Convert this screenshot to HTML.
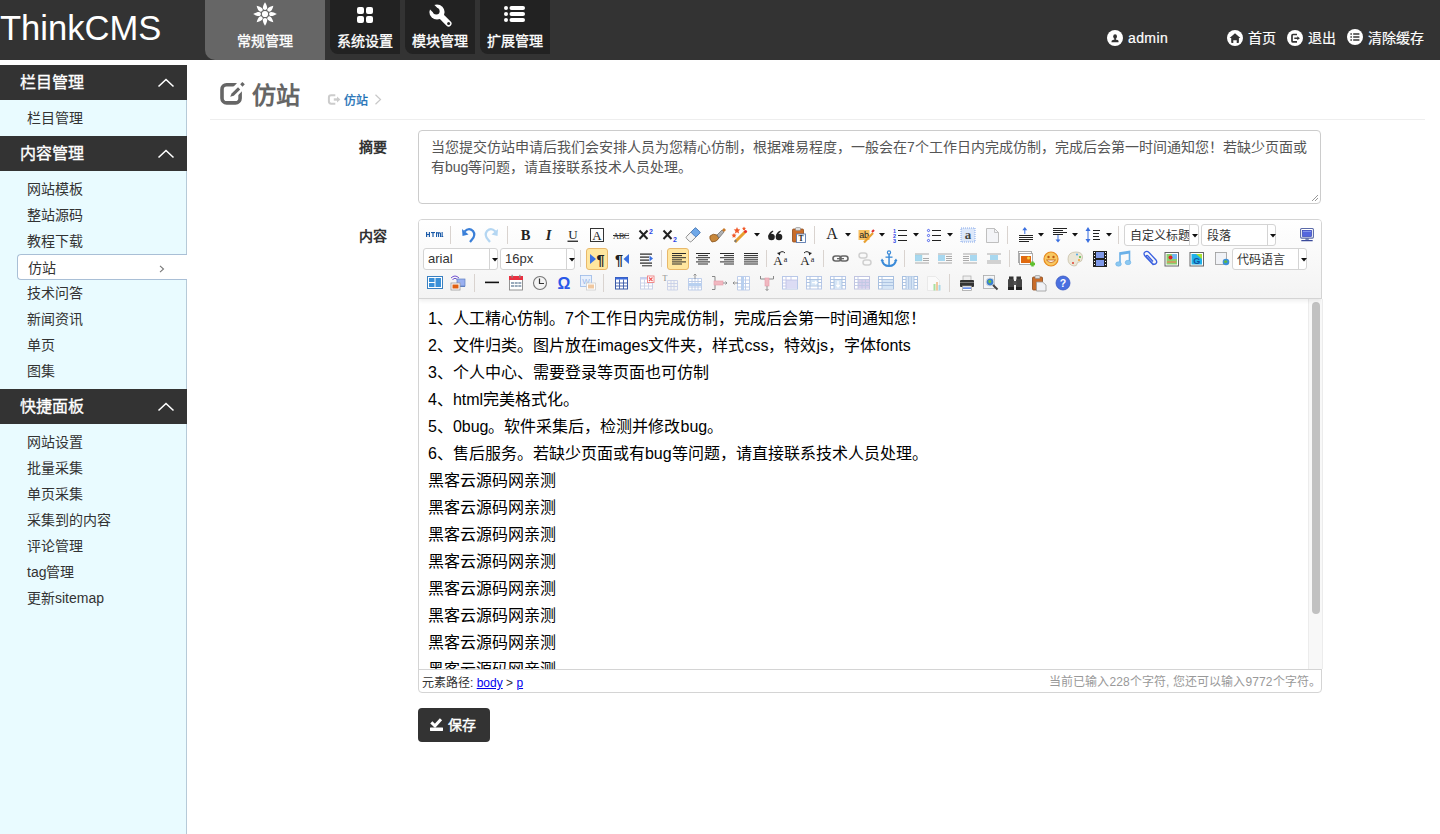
<!DOCTYPE html>
<html lang="zh-CN"><head><meta charset="utf-8">
<style>
*{margin:0;padding:0;box-sizing:border-box}
html,body{width:1440px;height:834px;overflow:hidden;background:#fff;font-family:"Liberation Sans",sans-serif;color:#333}
.hd{position:absolute;left:0;top:0;width:1440px;height:60px;background:#333}
.logo{position:absolute;left:0;top:6.5px;font-size:34.6px;color:#fff;line-height:42px;letter-spacing:0}
.tab{position:absolute;top:0;height:54px;background:#222;border-bottom-left-radius:8px;color:#fff;font-size:14px;font-weight:normal;-webkit-text-stroke:0.35px #fff;text-align:center}
.tab.on{background:#666;height:60px;border-bottom-left-radius:10px}
.tab .t{position:absolute;left:0;right:0;top:31px;line-height:20px;white-space:nowrap}
.tab svg{position:absolute}
.hr{position:absolute;top:28px;color:#fff;font-size:14px;line-height:20px;white-space:nowrap;font-weight:normal;-webkit-text-stroke:0.2px #fff}
.hr svg{position:absolute;left:0;top:2px}
.sb{position:absolute;left:0;top:60px;width:187px;height:774px;background:linear-gradient(#fff 0,#fff 5px,#e9fbff 5px);border-right:1px solid #b6cad8}
.sh{position:absolute;left:0;width:187px;height:35px;background:#333;color:#fff;font-size:16px;font-weight:normal;-webkit-text-stroke:0.35px #fff;line-height:35px;padding-left:20px}
.sh svg{position:absolute;left:157px;top:13px}
.si{position:absolute;left:27px;font-size:14px;color:#333;line-height:20px;white-space:nowrap}
.sel{position:absolute;left:17px;top:194px;width:170px;height:26px;background:#fff;border:1px solid #a9bfd6;border-right:none;border-radius:4px 0 0 4px}
.ttl{position:absolute;left:252px;top:80px;font-size:24px;font-weight:bold;color:#666;line-height:32px}
.bc{position:absolute;left:344px;top:92.5px;font-size:12px;color:#1a6fb5;-webkit-text-stroke:0.3px #1a6fb5;line-height:16px}
.line{position:absolute;left:210px;top:119px;width:1215px;height:1px;background:#eee}
.lbl{position:absolute;left:359px;font-size:14px;font-weight:bold;color:#333;line-height:20px}
.ta{position:absolute;left:418px;top:130px;width:903px;height:74px;border:1px solid #ccc;border-radius:4px;padding:6px 12px;font-size:14px;line-height:20px;color:#555}
.ed{position:absolute;left:418px;top:219px;width:904px;height:474px;border:1px solid #d4d4d4;border-radius:4px;overflow:hidden;background:#fff}
.tb{position:absolute;left:0;top:0;width:902px;height:79px;background:linear-gradient(#fff,#f3f3f3);border-bottom:1px solid #d4d4d4;box-shadow:0 2px 4px rgba(0,0,0,0.07);z-index:2}
.ic{position:absolute}
.sep{position:absolute;width:1px;background:#d9d3cf}
.cb{position:absolute;background:#fff;border:1px solid #d4d4d4;border-radius:3px}
.cbd{position:absolute;top:0;bottom:0;width:1px;background:#d4d4d4}
.cbt{position:absolute;top:0;overflow:hidden;white-space:nowrap;color:#333}
.act{position:absolute;background:#ffe69f;border:1px solid #e8b86a;border-radius:3px}
.body{position:absolute;left:0;top:79px;width:890px;height:370px;overflow:hidden;padding:6px 9px}
.body p{font-size:16px;line-height:27px;color:#000;white-space:nowrap}
.scr{position:absolute;left:1308px;top:299px;width:15px;height:370px;background:#f8f8f8;border-left:1px solid #ececec;border-right:1px solid #ececec}
.thumb{position:absolute;left:3px;top:3px;width:8px;height:312px;border-radius:4px;background:#c1c1c1}
.st{position:absolute;left:0;top:449px;width:902px;height:23px;border-top:1px solid #d4d4d4;font-size:12px;line-height:22px;color:#333;padding-left:3px;padding-top:2px}
.st a{color:#00e;text-decoration:underline}
.st .r{position:absolute;right:0px;top:1px;color:#999;letter-spacing:0.1px}
.btn{position:absolute;left:418px;top:708px;width:72px;height:34px;background:#333;border-radius:4px;color:#fff;font-size:14px;font-weight:normal;-webkit-text-stroke:0.4px #fff;line-height:34px}
</style></head><body>
<div class="hd">
  <div class="logo">ThinkCMS</div>
  <div class="tab on" style="left:205px;width:120px">
    <svg style="left:47px;top:1px" width="26" height="26" viewBox="0 0 26 26"><g fill="#fff"><circle cx="13" cy="13" r="3.1"/>
      <g id="pt"><path d="M13 1.2 C14.3 3.2 15.1 5.3 15.1 6.8 C15.1 8.1 14.2 8.9 13 8.9 C11.8 8.9 10.9 8.1 10.9 6.8 C10.9 5.3 11.7 3.2 13 1.2Z"/></g>
      <use href="#pt" transform="rotate(45 13 13)"/><use href="#pt" transform="rotate(90 13 13)"/><use href="#pt" transform="rotate(135 13 13)"/><use href="#pt" transform="rotate(180 13 13)"/><use href="#pt" transform="rotate(225 13 13)"/><use href="#pt" transform="rotate(270 13 13)"/><use href="#pt" transform="rotate(315 13 13)"/></g></svg>
    <div class="t">常规管理</div>
  </div>
  <div class="tab" style="left:330px;width:70px">
    <svg style="left:27px;top:7px" width="16" height="16" viewBox="0 0 16 16"><g fill="#fff"><rect x="0" y="0" width="7" height="7" rx="2"/><rect x="9" y="0" width="7" height="7" rx="2"/><rect x="0" y="9" width="7" height="7" rx="2"/><rect x="9" y="9" width="7" height="7" rx="2"/></g></svg>
    <div class="t">系统设置</div></div>
  <div class="tab" style="left:405px;width:70px">
    <svg style="left:23px;top:3px" width="25" height="25" viewBox="0 0 25 25"><defs><mask id="wm" maskUnits="userSpaceOnUse" x="0" y="0" width="25" height="25"><rect width="25" height="25" fill="#fff"/><circle cx="8.3" cy="8.3" r="3.3" fill="#000"/><path d="M8.3 8.3 L1 1" stroke="#000" stroke-width="6.2"/></mask></defs><g mask="url(#wm)" fill="#fff"><circle cx="9" cy="9" r="7.6"/><path d="M9 9 L20.6 20.6" stroke="#fff" stroke-width="5.8" stroke-linecap="round"/></g><circle cx="20.6" cy="20.6" r="1.5" fill="#222"/></svg>
    <div class="t">模块管理</div></div>
  <div class="tab" style="left:480px;width:70px">
    <svg style="left:23px;top:5px" width="24" height="18" viewBox="0 0 24 18"><g fill="#fff"><circle cx="3" cy="3" r="2"/><circle cx="3" cy="9" r="2"/><circle cx="3" cy="15" r="2"/><rect x="6.5" y="1" width="15.5" height="4" rx="2"/><rect x="6.5" y="7" width="15.5" height="4" rx="2"/><rect x="6.5" y="13" width="15.5" height="4" rx="2"/></g></svg>
    <div class="t">扩展管理</div></div>
  <div class="hr" style="left:1107px;padding-left:21px;letter-spacing:0.4px">
    <svg width="16" height="16" viewBox="0 0 16 16"><circle cx="8" cy="8" r="8" fill="#fff"/><ellipse cx="8.1" cy="6.5" rx="1.9" ry="2.2" fill="#333"/><rect x="7.3" y="7.5" width="1.6" height="2.5" fill="#333"/><path d="M4.4 12.2 Q4.2 10 6.5 9.7 H9.7 Q12 10 11.5 12.2Z" fill="#333"/></svg>admin</div>
  <div class="hr" style="left:1227px;padding-left:21px">
    <svg width="16" height="16" viewBox="0 0 16 16"><circle cx="8" cy="8" r="8" fill="#fff"/><path d="M8 3.2 L13.4 8.1 H11.9 V12.3 Q11.9 13 11.2 13 H9.7 V10.2 H6.3 V13 H4.9 Q4.2 13 4.2 12.3 V8.1 H2.6 Z" fill="#333"/></svg>首页</div>
  <div class="hr" style="left:1287px;padding-left:21px">
    <svg width="16" height="16" viewBox="0 0 16 16"><circle cx="8" cy="8" r="8" fill="#fff"/><path d="M10 4.5 H6 Q5 4.5 5 5.5 V10.9 Q5 11.9 6 11.9 H10" fill="none" stroke="#333" stroke-width="1.7"/><path d="M7.3 7.6 H10.3 V6.3 L12.9 8.3 L10.3 10.3 V9 H7.3Z" fill="#333"/></svg>退出</div>
  <div class="hr" style="left:1347px;padding-left:21px">
    <svg style="top:1px" width="16" height="16" viewBox="0 0 16 16"><circle cx="8" cy="8" r="8" fill="#fff"/><g fill="#444"><rect x="3.4" y="4.2" width="1.5" height="1.6"/><rect x="3.4" y="7.2" width="1.5" height="1.6"/><rect x="3.4" y="10.2" width="1.5" height="1.6"/><rect x="6.2" y="4.2" width="6.2" height="1.6"/><rect x="6.2" y="7.2" width="6.2" height="1.6"/><rect x="6.2" y="10.2" width="6.2" height="1.6"/></g></svg>清除缓存</div>
</div>

<div class="sb"><div style="position:absolute;left:186px;top:0;width:1px;height:5px;background:#fff"></div>
  <div class="sh" style="top:5px">栏目管理<svg width="18" height="10" viewBox="0 0 18 10"><path d="M1.5 8.5 L9 1.5 L16.5 8.5" fill="none" stroke="#fff" stroke-width="1.6"/></svg></div>
  <div class="si" style="top:48px">栏目管理</div>
  <div class="sh" style="top:76px">内容管理<svg width="18" height="10" viewBox="0 0 18 10"><path d="M1.5 8.5 L9 1.5 L16.5 8.5" fill="none" stroke="#fff" stroke-width="1.6"/></svg></div>
  <div class="si" style="top:119px">网站模板</div>
  <div class="si" style="top:145px">整站源码</div>
  <div class="si" style="top:171px">教程下载</div>
  <div class="sel"><svg style="position:absolute;left:141px;top:10px" width="6" height="8" viewBox="0 0 6 8"><path d="M1 0.8 L4.5 4 L1 7.2" fill="none" stroke="#777" stroke-width="1.1"/></svg></div>
  <div class="si" style="top:198px;left:28px">仿站</div>
  <div class="si" style="top:223px">技术问答</div>
  <div class="si" style="top:249px">新闻资讯</div>
  <div class="si" style="top:275px">单页</div>
  <div class="si" style="top:301px">图集</div>
  <div class="sh" style="top:329px">快捷面板<svg width="18" height="10" viewBox="0 0 18 10"><path d="M1.5 8.5 L9 1.5 L16.5 8.5" fill="none" stroke="#fff" stroke-width="1.6"/></svg></div>
  <div class="si" style="top:372px">网站设置</div>
  <div class="si" style="top:398px">批量采集</div>
  <div class="si" style="top:424px">单页采集</div>
  <div class="si" style="top:450px">采集到的内容</div>
  <div class="si" style="top:476px">评论管理</div>
  <div class="si" style="top:502px">tag管理</div>
  <div class="si" style="top:528px">更新sitemap</div>
</div>

<svg style="position:absolute;left:219px;top:81px" width="28" height="26" viewBox="0 0 28 26"><rect x="3" y="3.8" width="18.1" height="18.1" rx="4.6" fill="none" stroke="#666" stroke-width="3.6"/><path d="M12 14.75 L30 -3.25" stroke="#fff" stroke-width="9.3"/><path d="M11.2 15.8 L12.6 12.5 L19 6.2 L21.2 8.4 L14.8 14.7Z" fill="#666"/><path d="M21.2 3.3 L23.3 1 L25.8 3.2 L23.5 5.7Z" fill="#666"/></svg>
<div class="ttl">仿站</div>
<svg style="position:absolute;left:327px;top:93px" width="14" height="13" viewBox="0 0 14 13"><path d="M8.3 2.2 H4.2 Q1.9 2.2 1.9 4.5 V8.6 Q1.9 10.7 4.2 10.7 H8.3" fill="none" stroke="#ccc" stroke-width="2"/><rect x="6.8" y="5.3" width="3.6" height="2.4" fill="#ccc"/><path d="M10 3.6 L13.4 6.5 L10 9.4Z" fill="#ccc"/></svg>
<div class="bc">仿站</div>
<svg style="position:absolute;left:374px;top:94px" width="8" height="11" viewBox="0 0 8 11"><path d="M1.5 0.8 L6.5 5.5 L1.5 10.2" fill="none" stroke="#c8c8c8" stroke-width="1.2"/></svg>
<div class="line"></div>

<div class="lbl" style="top:137px">摘要</div>
<div class="ta">当您提交仿站申请后我们会安排人员为您精心仿制，根据难易程度，一般会在7个工作日内完成仿制，完成后会第一时间通知您！若缺少页面或<br>有bug等问题，请直接联系技术人员处理。
<svg style="position:absolute;right:1px;bottom:1px" width="8" height="8" viewBox="0 0 8 8"><path d="M7 1 L1 7 M7 4 L4 7" stroke="#999" stroke-width="1"/></svg></div>

<div class="lbl" style="top:226px">内容</div>
<div class="ed">
  <div class="tb"></div>
  <div class="body">
<p>1、人工精心仿制。7个工作日内完成仿制，完成后会第一时间通知您！</p>
<p>2、文件归类。图片放在images文件夹，样式css，特效js，字体fonts</p>
<p>3、个人中心、需要登录等页面也可仿制</p>
<p>4、html完美格式化。</p>
<p>5、0bug。软件采集后，检测并修改bug。</p>
<p>6、售后服务。若缺少页面或有bug等问题，请直接联系技术人员处理。</p>
<p>黑客云源码网亲测</p>
<p>黑客云源码网亲测</p>
<p>黑客云源码网亲测</p>
<p>黑客云源码网亲测</p>
<p>黑客云源码网亲测</p>
<p>黑客云源码网亲测</p>
<p>黑客云源码网亲测</p>
<p>黑客云源码网亲测</p>
  </div>
  
  <div class="st">元素路径: <a>body</a> &gt; <a>p</a><span class="r">当前已输入228个字符, 您还可以输入9772个字符。</span></div>
</div>
<div class="scr"><div class="thumb"></div></div>
<div style="position:absolute;left:0;top:0;z-index:3">
<svg class="ic" style="left:424px;top:225px" width="20" height="20" viewBox="0 0 20 20"><g fill="#1a5aa8"><rect x="2" y="7" width="1.2" height="5"/><rect x="4.8" y="7" width="1.2" height="5"/><rect x="2" y="9" width="4" height="1"/><rect x="7" y="7" width="4" height="1.1"/><rect x="8.4" y="7" width="1.2" height="5"/><rect x="12" y="7.3" width="1.1" height="4.7"/><rect x="14" y="8" width="1" height="4"/><rect x="15.9" y="8" width="1.1" height="4"/><rect x="12" y="7.3" width="4.6" height="1.1" rx="0.5"/><rect x="17.6" y="7" width="1.1" height="5"/><rect x="17.6" y="11" width="1.6" height="1"/></g></svg>
<div class="sep" style="left:450px;top:226px;height:18px"></div>
<svg class="ic" style="left:458px;top:225px" width="20" height="20" viewBox="0 0 20 20"><path d="M6.5 6.5 Q11 2 15 6 Q18 10 14 14.5 L12 17" fill="none" stroke="#3a7fd8" stroke-width="2.2"/><path d="M4 4 L4.5 11 L10.5 9.5 Z" fill="#3a7fd8"/></svg>
<svg class="ic" style="left:482px;top:225px" width="20" height="20" viewBox="0 0 20 20"><path d="M13.5 6.5 Q9 2 5 6 Q2 10 6 14.5 L8 17" fill="none" stroke="#b4d6f2" stroke-width="2.2"/><path d="M16 4 L15.5 11 L9.5 9.5 Z" fill="#b4d6f2"/></svg>
<div class="sep" style="left:507px;top:226px;height:18px"></div>
<svg class="ic" style="left:516px;top:225px" width="20" height="20" viewBox="0 0 20 20"><text x="9.6" y="14.6" font-family="Liberation Serif" font-weight="bold" font-size="14.5" fill="#222" text-anchor="middle">B</text></svg>
<svg class="ic" style="left:539px;top:225px" width="20" height="20" viewBox="0 0 20 20"><text x="9.6" y="14.6" font-family="Liberation Serif" font-style="italic" font-weight="bold" font-size="14.5" fill="#222" text-anchor="middle">I</text></svg>
<svg class="ic" style="left:563px;top:225px" width="20" height="20" viewBox="0 0 20 20"><text x="10" y="14.2" font-family="Liberation Serif" font-size="13" fill="#222" text-anchor="middle">U</text><rect x="4.5" y="15.6" width="10.5" height="1.3" fill="#222"/></svg>
<svg class="ic" style="left:587px;top:225px" width="20" height="20" viewBox="0 0 20 20"><rect x="3.5" y="3.5" width="13" height="13" fill="none" stroke="#333" stroke-width="1"/><text x="10" y="14.8" font-family="Liberation Serif" font-size="13" fill="#222" text-anchor="middle">A</text></svg>
<svg class="ic" style="left:611px;top:225px" width="20" height="20" viewBox="0 0 20 20"><text x="10" y="13.5" font-family="Liberation Serif" font-size="8.5" fill="#333" text-anchor="middle" letter-spacing="-0.5">ABC</text><rect x="2" y="10" width="16" height="1" fill="#333"/></svg>
<svg class="ic" style="left:636px;top:225px" width="20" height="20" viewBox="0 0 20 20"><path d="M3.5 5.5 L11.5 14 M11.5 5.5 L3.5 14" stroke="#222" stroke-width="2"/><text x="15" y="8.5" font-family="Liberation Sans" font-weight="bold" font-size="7" fill="#2b45e6" text-anchor="middle">2</text></svg>
<svg class="ic" style="left:660px;top:225px" width="20" height="20" viewBox="0 0 20 20"><path d="M3.5 5.5 L11.5 14 M11.5 5.5 L3.5 14" stroke="#222" stroke-width="2"/><text x="15" y="17" font-family="Liberation Sans" font-weight="bold" font-size="7" fill="#2b45e6" text-anchor="middle">2</text></svg>
<svg class="ic" style="left:683px;top:225px" width="20" height="20" viewBox="0 0 20 20"><g transform="rotate(-45 10 10)"><rect x="3" y="6.5" width="14" height="7" rx="1.5" fill="#f4f4f4" stroke="#888" stroke-width="0.9"/><rect x="10.5" y="6.5" width="6.5" height="7" rx="1" fill="#6fa8e8" stroke="#4d7fc0" stroke-width="0.9"/></g></svg>
<svg class="ic" style="left:707px;top:225px" width="20" height="20" viewBox="0 0 20 20"><path d="M3 11 Q6 8 10 10 L12 13 Q10 17 5 17 Q2 14 3 11Z" fill="#c8873a" stroke="#8a5520" stroke-width="0.8"/><path d="M10 10 L15 5 L17 7 L12 13Z" fill="#b0b0b0" stroke="#666" stroke-width="0.7"/><path d="M15 5 L17 3 L19 5 L17 7Z" fill="#c77a2a"/></svg>
<svg class="ic" style="left:731px;top:225px" width="20" height="20" viewBox="0 0 20 20"><path d="M4 17 L14 7" stroke="#e8a030" stroke-width="3"/><path d="M4 17 L5 15" stroke="#777" stroke-width="2"/><circle cx="14.5" cy="6.5" r="1.6" fill="#e8302a"/><path d="M6 2 l1 2.2 2.3 .3-1.7 1.6 .4 2.3-2-1.1-2 1.1 .4-2.3-1.7-1.6 2.3-.3z" fill="#f05a2a"/><path d="M3 8 l.8 1.6 1.7.2-1.3 1.2 .3 1.7-1.5-.8-1.5 .8 .3-1.7-1.3-1.2 1.7-.2z" fill="#f05a2a"/><path d="M13 1.5 l.6 1.3 1.4.2-1 1 .2 1.4-1.2-.7-1.2 .7 .2-1.4-1-1 1.4-.2z" fill="#f05a2a"/></svg>
<svg class="ic" style="left:754px;top:233px" width="6" height="4" viewBox="0 0 6 4"><path d="M0 0H6L3 3.5Z" fill="#111"/></svg>
<svg class="ic" style="left:765px;top:225px" width="20" height="20" viewBox="0 0 20 20"><circle cx="6.5" cy="12" r="3.3" fill="#222"/><path d="M3.3 12 Q3.5 7 8 5.5 L8.3 6.5 Q5.5 8 5.5 11Z" fill="#222"/><circle cx="14" cy="12" r="3.3" fill="#222"/><path d="M10.8 12 Q11 7 15.5 5.5 L15.8 6.5 Q13 8 13 11Z" fill="#222"/></svg>
<svg class="ic" style="left:789px;top:225px" width="20" height="20" viewBox="0 0 20 20"><rect x="3.5" y="4" width="11" height="13" rx="1" fill="#c86c2a" stroke="#8a4a1a" stroke-width="0.8"/><rect x="6.5" y="2.5" width="5" height="3" rx="1" fill="#ddd" stroke="#888" stroke-width="0.6"/><rect x="7.5" y="9" width="9" height="8.5" fill="#fff" stroke="#5a7ab0" stroke-width="0.9"/><text x="12" y="16.2" font-family="Liberation Serif" font-weight="bold" font-size="7.5" fill="#222" text-anchor="middle">T</text></svg>
<div class="sep" style="left:814px;top:226px;height:18px"></div>
<svg class="ic" style="left:822px;top:225px" width="20" height="20" viewBox="0 0 20 20"><text x="10" y="14.3" font-family="Liberation Serif" font-size="16" fill="#222" text-anchor="middle">A</text></svg>
<svg class="ic" style="left:845px;top:233px" width="6" height="4" viewBox="0 0 6 4"><path d="M0 0H6L3 3.5Z" fill="#111"/></svg>
<svg class="ic" style="left:856px;top:225px" width="20" height="20" viewBox="0 0 20 20"><rect x="2.5" y="5" width="11" height="10" fill="#f5c060"/><text x="8" y="13.3" font-family="Liberation Sans" font-size="9" fill="#222" text-anchor="middle" letter-spacing="-0.3">ab</text><path d="M8 17.5 L17 8" stroke="#e8a030" stroke-width="2.2"/><path d="M16 7 L18 5" stroke="#e03030" stroke-width="2.2"/></svg>
<svg class="ic" style="left:879px;top:233px" width="6" height="4" viewBox="0 0 6 4"><path d="M0 0H6L3 3.5Z" fill="#111"/></svg>
<svg class="ic" style="left:890px;top:225px" width="20" height="20" viewBox="0 0 20 20"><text x="4.6" y="8" font-family="Liberation Sans" font-weight="bold" font-size="5.5" fill="#2b45e6" text-anchor="middle">1</text><text x="4.6" y="13" font-family="Liberation Sans" font-weight="bold" font-size="5.5" fill="#2b45e6" text-anchor="middle">2</text><text x="4.6" y="18" font-family="Liberation Sans" font-weight="bold" font-size="5.5" fill="#2b45e6" text-anchor="middle">3</text><rect x="8" y="5" width="9" height="1" fill="#222"/><rect x="8" y="10" width="9" height="1" fill="#222"/><rect x="8" y="15" width="9" height="1" fill="#222"/></svg>
<svg class="ic" style="left:913px;top:233px" width="6" height="4" viewBox="0 0 6 4"><path d="M0 0H6L3 3.5Z" fill="#111"/></svg>
<svg class="ic" style="left:924px;top:225px" width="20" height="20" viewBox="0 0 20 20"><circle cx="4.5" cy="5.5" r="1.1" fill="none" stroke="#2b45e6" stroke-width="0.8"/><circle cx="4.5" cy="10.5" r="1.1" fill="none" stroke="#2b45e6" stroke-width="0.8"/><circle cx="4.5" cy="15.5" r="1.1" fill="none" stroke="#2b45e6" stroke-width="0.8"/><rect x="8" y="5" width="9" height="1" fill="#222"/><rect x="8" y="10" width="9" height="1" fill="#222"/><rect x="8" y="15" width="9" height="1" fill="#222"/></svg>
<svg class="ic" style="left:947px;top:233px" width="6" height="4" viewBox="0 0 6 4"><path d="M0 0H6L3 3.5Z" fill="#111"/></svg>
<svg class="ic" style="left:958px;top:225px" width="20" height="20" viewBox="0 0 20 20"><rect x="3" y="3" width="14" height="14" fill="#dde8fa" stroke="#7aa0e8" stroke-width="0.9" stroke-dasharray="1 1"/><text x="10" y="14.3" font-family="Liberation Serif" font-weight="bold" font-size="13" fill="#444" text-anchor="middle">a</text></svg>
<svg class="ic" style="left:982px;top:225px" width="20" height="20" viewBox="0 0 20 20"><path d="M4.5 3.5 H12.5 L16.5 7.5 V17.5 H4.5Z" fill="#f3f4f7" stroke="#b8b8b8" stroke-width="0.9"/><path d="M12.5 3.5 V7.5 H16.5" fill="none" stroke="#b8b8b8" stroke-width="0.8"/></svg>
<div class="sep" style="left:1007px;top:226px;height:18px"></div>
<svg class="ic" style="left:1016px;top:225px" width="20" height="20" viewBox="0 0 20 20"><path d="M6.3 5.2 L8.8 2 L11.3 5.2Z" fill="#3a6fe0"/><rect x="8.3" y="4" width="1" height="5" fill="#3a6fe0"/><rect x="3" y="10" width="14" height="1" fill="#222"/><rect x="3" y="12" width="14" height="1" fill="#222"/><rect x="3" y="14" width="14" height="1" fill="#222"/><rect x="3" y="16" width="10" height="1" fill="#222"/></svg>
<svg class="ic" style="left:1038px;top:233px" width="6" height="4" viewBox="0 0 6 4"><path d="M0 0H6L3 3.5Z" fill="#111"/></svg>
<svg class="ic" style="left:1050px;top:225px" width="20" height="20" viewBox="0 0 20 20"><rect x="3" y="3" width="14" height="1" fill="#222"/><rect x="3" y="5" width="10" height="1" fill="#222"/><rect x="3" y="7" width="14" height="1" fill="#222"/><rect x="3" y="9" width="10" height="1" fill="#222"/><rect x="7.5" y="10" width="1" height="5" fill="#3a6fe0"/><path d="M5.5 14.5 L8 17.5 L10.5 14.5Z" fill="#3a6fe0"/></svg>
<svg class="ic" style="left:1072px;top:233px" width="6" height="4" viewBox="0 0 6 4"><path d="M0 0H6L3 3.5Z" fill="#111"/></svg>
<svg class="ic" style="left:1083px;top:225px" width="20" height="20" viewBox="0 0 20 20"><rect x="4.5" y="4.5" width="1" height="11" fill="#3a6fe0"/><path d="M2.5 6 L5 2 L7.5 6Z" fill="#3a6fe0"/><path d="M2.5 14 L5 18 L7.5 14Z" fill="#3a6fe0"/><rect x="10" y="5" width="7" height="1" fill="#222"/><rect x="10" y="8" width="6" height="1" fill="#222"/><rect x="10" y="11" width="6" height="1" fill="#222"/><rect x="10" y="14" width="7" height="1" fill="#222"/></svg>
<svg class="ic" style="left:1106px;top:233px" width="6" height="4" viewBox="0 0 6 4"><path d="M0 0H6L3 3.5Z" fill="#111"/></svg>
<div class="sep" style="left:1118px;top:226px;height:18px"></div>
<div class="cb" style="left:1124px;top:224px;width:75px;height:22px"><div class="cbd" style="left:64px"></div><div class="cbt" style="left:5px;top:0.5px;width:59px;font-size:12px;line-height:20px">自定义标题</div><svg style="position:absolute;left:67px;top:9px" width="6" height="4" viewBox="0 0 6 4"><path d="M0 0H6L3 3.5Z" fill="#111"/></svg></div>
<div class="cb" style="left:1201px;top:224px;width:75px;height:22px"><div class="cbd" style="left:65px"></div><div class="cbt" style="left:5px;top:0.5px;width:60px;font-size:12px;line-height:20px">段落</div><svg style="position:absolute;left:68px;top:9px" width="6" height="4" viewBox="0 0 6 4"><path d="M0 0H6L3 3.5Z" fill="#111"/></svg></div>
<svg class="ic" style="left:1297px;top:225px" width="20" height="20" viewBox="0 0 20 20"><rect x="3.6" y="3.5" width="12.8" height="9.6" rx="1" fill="#fff" stroke="#5a6aa8" stroke-width="1.1"/><rect x="5.4" y="5.3" width="9.2" height="6.3" fill="#5566dd" stroke="#2a3ab0" stroke-width="0.6"/><rect x="6" y="6" width="8" height="0.8" fill="#8fa0f0"/><rect x="8.4" y="13.3" width="3.4" height="1.5" fill="#5a6aa8"/><rect x="4.2" y="15" width="11.6" height="1.3" rx="0.6" fill="#3a4a9a"/></svg>
<div class="cb" style="left:423px;top:248px;width:75px;height:22px"><div class="cbd" style="left:65px"></div><div class="cbt" style="left:4px;top:0px;width:61px;font-size:13px;line-height:20px">arial</div><svg style="position:absolute;left:68px;top:9px" width="6" height="4" viewBox="0 0 6 4"><path d="M0 0H6L3 3.5Z" fill="#111"/></svg></div>
<div class="cb" style="left:500px;top:248px;width:75px;height:22px"><div class="cbd" style="left:65px"></div><div class="cbt" style="left:4px;top:0px;width:61px;font-size:13px;line-height:20px">16px</div><svg style="position:absolute;left:68px;top:9px" width="6" height="4" viewBox="0 0 6 4"><path d="M0 0H6L3 3.5Z" fill="#111"/></svg></div>
<div class="sep" style="left:580px;top:250px;height:17px"></div>
<div class="act" style="left:586px;top:248px;width:22px;height:22px"></div>
<svg class="ic" style="left:587px;top:249px" width="20" height="20" viewBox="0 0 20 20"><path d="M3 5 L9 10 L3 15Z" fill="#3a6fe0"/><text x="13.5" y="15.5" font-family="Liberation Sans" font-weight="bold" font-size="14.5" fill="#222" text-anchor="middle">¶</text></svg>
<svg class="ic" style="left:612px;top:249px" width="20" height="20" viewBox="0 0 20 20"><text x="7" y="15.5" font-family="Liberation Sans" font-weight="bold" font-size="14.5" fill="#222" text-anchor="middle">¶</text><path d="M17 5 L11.5 10 L17 15Z" fill="#3a6fe0"/></svg>
<svg class="ic" style="left:636px;top:249px" width="20" height="20" viewBox="0 0 20 20"><rect x="4" y="4.5" width="12" height="1.2" fill="#222"/><rect x="4" y="7.5" width="9" height="1.2" fill="#222"/><rect x="4" y="10.5" width="9" height="1.2" fill="#222"/><rect x="4" y="13.5" width="12" height="1.2" fill="#222"/><rect x="6" y="16.3" width="10" height="1" fill="#222"/><path d="M13.5 6.5 L17 9.5 L13.5 12.5Z" fill="#3a6fe0"/></svg>
<div class="sep" style="left:661px;top:250px;height:17px"></div>
<div class="act" style="left:667px;top:248px;width:22px;height:22px"></div>
<svg class="ic" style="left:670px;top:249px" width="18" height="20" viewBox="0 0 18 20"><rect x="2" y="4.0" width="14" height="1" fill="#2a2a2a"/><rect x="2" y="6.1" width="10" height="1" fill="#2a2a2a"/><rect x="2" y="8.2" width="14" height="1" fill="#2a2a2a"/><rect x="2" y="10.3" width="10" height="1" fill="#2a2a2a"/><rect x="2" y="12.4" width="14" height="1" fill="#2a2a2a"/><rect x="2" y="14.5" width="10" height="1" fill="#2a2a2a"/></svg>
<svg class="ic" style="left:694px;top:249px" width="18" height="20" viewBox="0 0 18 20"><rect x="2" y="4.0" width="14" height="1" fill="#2a2a2a"/><rect x="4" y="6.1" width="10" height="1" fill="#2a2a2a"/><rect x="2" y="8.2" width="14" height="1" fill="#2a2a2a"/><rect x="4" y="10.3" width="10" height="1" fill="#2a2a2a"/><rect x="2" y="12.4" width="14" height="1" fill="#2a2a2a"/><rect x="4" y="14.5" width="10" height="1" fill="#2a2a2a"/></svg>
<svg class="ic" style="left:718px;top:249px" width="18" height="20" viewBox="0 0 18 20"><rect x="2" y="4.0" width="14" height="1" fill="#2a2a2a"/><rect x="6" y="6.1" width="10" height="1" fill="#2a2a2a"/><rect x="2" y="8.2" width="14" height="1" fill="#2a2a2a"/><rect x="6" y="10.3" width="10" height="1" fill="#2a2a2a"/><rect x="2" y="12.4" width="14" height="1" fill="#2a2a2a"/><rect x="6" y="14.5" width="10" height="1" fill="#2a2a2a"/></svg>
<svg class="ic" style="left:742px;top:249px" width="18" height="20" viewBox="0 0 18 20"><rect x="2" y="4.0" width="14" height="1" fill="#2a2a2a"/><rect x="2" y="6.1" width="14" height="1" fill="#2a2a2a"/><rect x="2" y="8.2" width="14" height="1" fill="#2a2a2a"/><rect x="2" y="10.3" width="14" height="1" fill="#2a2a2a"/><rect x="2" y="12.4" width="14" height="1" fill="#2a2a2a"/><rect x="2" y="14.5" width="14" height="1" fill="#2a2a2a"/></svg>
<div class="sep" style="left:766px;top:250px;height:17px"></div>
<svg class="ic" style="left:771px;top:249px" width="20" height="20" viewBox="0 0 20 20"><text x="7" y="16" font-family="Liberation Serif" font-size="13" fill="#222" text-anchor="middle">A</text><text x="14.5" y="12.5" font-family="Liberation Serif" font-size="8" fill="#222" text-anchor="middle">a</text><path d="M8 4.5 Q11 1 14 4" fill="none" stroke="#222" stroke-width="1"/><path d="M6 4 L9.5 3 L8.8 6.5Z" fill="#222"/></svg>
<svg class="ic" style="left:798px;top:249px" width="20" height="20" viewBox="0 0 20 20"><text x="7" y="16" font-family="Liberation Serif" font-size="13" fill="#222" text-anchor="middle">A</text><text x="14.5" y="12.5" font-family="Liberation Serif" font-size="8" fill="#222" text-anchor="middle">a</text><path d="M6 4 Q9 1 12 4.5" fill="none" stroke="#222" stroke-width="1"/><path d="M14 4 L10.5 3 L11.2 6.5Z" fill="#222"/></svg>
<div class="sep" style="left:823px;top:250px;height:17px"></div>
<svg class="ic" style="left:831px;top:249px" width="20" height="20" viewBox="0 0 20 20"><rect x="2" y="7" width="8" height="5" rx="2.5" fill="none" stroke="#666" stroke-width="1.6"/><rect x="9" y="7" width="8" height="5" rx="2.5" fill="none" stroke="#666" stroke-width="1.6"/><rect x="6" y="9" width="7" height="1.3" fill="#666"/></svg>
<svg class="ic" style="left:855px;top:249px" width="20" height="20" viewBox="0 0 20 20"><rect x="4" y="4" width="8" height="5" rx="2.5" fill="none" stroke="#d0d0d0" stroke-width="1.5"/><rect x="8" y="11" width="8" height="5" rx="2.5" fill="none" stroke="#d0d0d0" stroke-width="1.5"/></svg>
<svg class="ic" style="left:879px;top:249px" width="20" height="20" viewBox="0 0 20 20"><circle cx="10" cy="3.5" r="1.6" fill="none" stroke="#3a8ad8" stroke-width="1.2"/><rect x="9.3" y="5" width="1.5" height="11" fill="#3a8ad8"/><rect x="6.5" y="7.5" width="7" height="1.3" fill="#3a8ad8"/><path d="M3 11 Q4 17 10 17 Q16 17 17 11" fill="none" stroke="#3a8ad8" stroke-width="2"/><path d="M1.5 12 L3 9.5 L5 12Z M15 12 L17 9.5 L18.5 12Z" fill="#3a8ad8"/></svg>
<div class="sep" style="left:904px;top:250px;height:17px"></div>
<svg class="ic" style="left:915px;top:250px" width="14" height="16" viewBox="0 0 14 16"><rect x="0" y="3.5" width="14" height="1" fill="#aaa"/><rect x="0" y="5" width="7" height="6" fill="#a8d8f0" stroke="#8cc" stroke-width="0.3"/><rect x="8" y="8" width="6" height="1" fill="#aaa"/><rect x="8" y="10" width="6" height="1" fill="#aaa"/><rect x="0" y="12.5" width="14" height="1" fill="#aaa"/></svg>
<svg class="ic" style="left:938px;top:250px" width="14" height="16" viewBox="0 0 14 16"><rect x="0" y="3.5" width="14" height="1" fill="#aaa"/><rect x="0" y="5" width="7" height="6" fill="#a8d8f0"/><rect x="8" y="6" width="6" height="1" fill="#aaa"/><rect x="8" y="8" width="6" height="1" fill="#aaa"/><rect x="8" y="10" width="6" height="1" fill="#aaa"/><rect x="0" y="12.5" width="14" height="1" fill="#aaa"/></svg>
<svg class="ic" style="left:963px;top:250px" width="14" height="16" viewBox="0 0 14 16"><rect x="0" y="3.5" width="14" height="1" fill="#aaa"/><rect x="7" y="5" width="7" height="6" fill="#a8d8f0"/><rect x="0" y="6" width="6" height="1" fill="#aaa"/><rect x="0" y="8" width="6" height="1" fill="#aaa"/><rect x="0" y="10" width="6" height="1" fill="#aaa"/><rect x="0" y="12.5" width="14" height="1" fill="#aaa"/></svg>
<svg class="ic" style="left:987px;top:250px" width="14" height="16" viewBox="0 0 14 16"><rect x="0" y="3.5" width="14" height="1" fill="#aaa"/><rect x="3" y="5" width="8" height="5" fill="#a8d8f0"/><rect x="0" y="10.5" width="14" height="1" fill="#aaa"/><rect x="0" y="12.5" width="14" height="1" fill="#aaa"/></svg>
<div class="sep" style="left:1009px;top:250px;height:17px"></div>
<svg class="ic" style="left:1016px;top:249px" width="20" height="20" viewBox="0 0 20 20"><rect x="2.5" y="2.5" width="13" height="11" fill="#fff" stroke="#999" stroke-width="0.8"/><rect x="3.5" y="4.5" width="13" height="11" fill="#fff" stroke="#999" stroke-width="0.8"/><rect x="5" y="7" width="10" height="7" fill="#e06a10"/><circle cx="12.5" cy="9" r="1.5" fill="#f8d040"/><path d="M14 15 h5 M16.5 12.5 v5" stroke="#60c030" stroke-width="2.5"/></svg>
<svg class="ic" style="left:1041px;top:249px" width="20" height="20" viewBox="0 0 20 20"><circle cx="10" cy="10" r="7" fill="#f8c860" stroke="#e88a20" stroke-width="1.2"/><circle cx="7.5" cy="8" r="1.2" fill="#c05a10"/><circle cx="12.5" cy="8" r="1.2" fill="#c05a10"/><path d="M5.5 11 Q10 16 14.5 11Z" fill="#fff" stroke="#c05a10" stroke-width="0.8"/></svg>
<svg class="ic" style="left:1065px;top:249px" width="20" height="20" viewBox="0 0 20 20"><path d="M3 10 Q3 3 11 3 Q18 3 17.5 9 Q17 13 14 13 Q12 13 12 15 Q12 17 9 17 Q3 16 3 10Z" fill="#ebe6d6" stroke="#c8c0a8" stroke-width="0.8"/><circle cx="12" cy="5.5" r="1" fill="#4aa8e8"/><circle cx="15" cy="8" r="1" fill="#50b840"/><circle cx="14" cy="11" r="1" fill="#f0a030"/><circle cx="8" cy="14" r="1" fill="#e04030"/></svg>
<svg class="ic" style="left:1090px;top:249px" width="20" height="20" viewBox="0 0 20 20"><rect x="3" y="2" width="14" height="16" fill="#222"/><rect x="6" y="3" width="8" height="6" fill="#7e98e8"/><rect x="6" y="11" width="8" height="6" fill="#7e98e8"/><g fill="#fff"><rect x="4" y="3" width="1" height="1"/><rect x="4" y="6" width="1" height="1"/><rect x="4" y="9" width="1" height="1"/><rect x="4" y="12" width="1" height="1"/><rect x="4" y="15" width="1" height="1"/><rect x="15" y="3" width="1" height="1"/><rect x="15" y="6" width="1" height="1"/><rect x="15" y="9" width="1" height="1"/><rect x="15" y="12" width="1" height="1"/><rect x="15" y="15" width="1" height="1"/></g></svg>
<svg class="ic" style="left:1113px;top:249px" width="20" height="20" viewBox="0 0 20 20"><path d="M7 15 V4 L16.5 2.5 V13" fill="none" stroke="#6ab0e8" stroke-width="1.6"/><ellipse cx="5.5" cy="15" rx="2.8" ry="2.2" fill="#8cc8f0" stroke="#6ab0e8" stroke-width="0.6"/><ellipse cx="15" cy="13.5" rx="2.8" ry="2.2" fill="#8cc8f0" stroke="#6ab0e8" stroke-width="0.6"/><path d="M7 5 L16.5 3.5" stroke="#6ab0e8" stroke-width="2"/></svg>
<svg class="ic" style="left:1139px;top:249px" width="20" height="20" viewBox="0 0 20 20"><path d="M14.5 16 L6 7 Q4 4.5 6 3 Q8 1.5 10 3.5 L17 11 Q18.5 13 17 14.5 Q15.5 16 13.5 14.5 L7.5 8 Q6.8 7 7.5 6.5 Q8.3 6 9 7 L14 12.5" fill="none" stroke="#3a60e0" stroke-width="1.3"/></svg>
<svg class="ic" style="left:1162px;top:249px" width="20" height="20" viewBox="0 0 20 20"><rect x="3" y="3.5" width="13.5" height="13.5" fill="#fff" stroke="#666" stroke-width="1"/><rect x="4.5" y="5" width="10.5" height="10.5" fill="#8cd070"/><rect x="10" y="5" width="5" height="5" fill="#70b8f0"/><circle cx="8.5" cy="8.5" r="2" fill="#e02020"/><rect x="5" y="12" width="9" height="2" fill="#c8a060"/></svg>
<svg class="ic" style="left:1187px;top:249px" width="20" height="20" viewBox="0 0 20 20"><rect x="3" y="3.5" width="13.5" height="13.5" fill="#fff" stroke="#666" stroke-width="1"/><rect x="4.5" y="5" width="10.5" height="10.5" fill="#20b0e8"/><path d="M4.5 5 H15 V10 L9 5Z" fill="#a8e030"/><text x="9.8" y="14.5" font-family="Liberation Sans" font-weight="bold" font-size="9" fill="#1050a0" text-anchor="middle">G</text></svg>
<svg class="ic" style="left:1212px;top:249px" width="20" height="20" viewBox="0 0 20 20"><rect x="3.5" y="3.5" width="11" height="12" fill="#f0f2f6" stroke="#999" stroke-width="0.8"/><circle cx="14" cy="13" r="3.3" fill="#3a90d8"/><path d="M12 12 Q14 10.5 15.5 12.5 Q14.5 14.5 12.5 14Z" fill="#60b840"/></svg>
<div class="cb" style="left:1232px;top:248px;width:75px;height:22px"><div class="cbd" style="left:65px"></div><div class="cbt" style="left:4px;top:0.5px;width:61px;font-size:12px;line-height:20px">代码语言</div><svg style="position:absolute;left:68px;top:9px" width="6" height="4" viewBox="0 0 6 4"><path d="M0 0H6L3 3.5Z" fill="#111"/></svg></div>
<svg class="ic" style="left:425px;top:273px" width="20" height="20" viewBox="0 0 20 20"><rect x="2.5" y="3.5" width="15" height="12" fill="#fff" stroke="#3a80c0" stroke-width="1"/><rect x="4" y="5" width="5.5" height="4" fill="#3a90d8"/><rect x="4" y="10" width="5.5" height="4" fill="#3a90d8"/><rect x="10.5" y="5" width="5.5" height="9" fill="#3a90d8"/></svg>
<svg class="ic" style="left:448px;top:273px" width="20" height="20" viewBox="0 0 20 20"><path d="M3 5 Q7 1 11 5" fill="none" stroke="#7050d0" stroke-width="1"/><path d="M4.5 6.5 Q7 4 9.5 6.5" fill="none" stroke="#7050d0" stroke-width="1"/><rect x="9" y="6" width="8" height="7" fill="#9ab0f0" stroke="#6080c0" stroke-width="0.7"/><rect x="12" y="13" width="5" height="1" fill="#6080c0"/><rect x="3" y="10" width="9" height="7" fill="#fff" stroke="#999" stroke-width="0.8"/><rect x="4.5" y="11.5" width="6" height="4" fill="#e06010"/></svg>
<div class="sep" style="left:474px;top:274px;height:18px"></div>
<svg class="ic" style="left:482px;top:273px" width="20" height="20" viewBox="0 0 20 20"><rect x="3" y="8.6" width="14" height="1.6" fill="#111"/></svg>
<svg class="ic" style="left:506px;top:273px" width="20" height="20" viewBox="0 0 20 20"><rect x="3.5" y="3.5" width="13" height="13.5" fill="#fff" stroke="#888" stroke-width="0.9"/><rect x="3" y="3" width="14" height="4" fill="#e83040"/><rect x="5.5" y="1.8" width="1.3" height="3" fill="#888"/><rect x="13.2" y="1.8" width="1.3" height="3" fill="#888"/><g fill="#9ab"><rect x="5" y="9" width="3" height="2"/><rect x="8.7" y="9" width="3" height="2"/><rect x="12.3" y="9" width="3" height="2"/><rect x="5" y="12" width="3" height="2"/><rect x="8.7" y="12" width="3" height="2"/><rect x="12.3" y="12" width="3" height="2"/></g></svg>
<svg class="ic" style="left:530px;top:273px" width="20" height="20" viewBox="0 0 20 20"><circle cx="10" cy="10" r="6.5" fill="#f4f4f4" stroke="#777" stroke-width="1.1"/><path d="M9.5 5.5 V10.5 H14" fill="none" stroke="#333" stroke-width="1.2"/></svg>
<svg class="ic" style="left:554px;top:273px" width="20" height="20" viewBox="0 0 20 20"><text x="10" y="16.2" font-family="Liberation Sans" font-weight="bold" font-size="16" fill="#2a58e8" text-anchor="middle">Ω</text></svg>
<svg class="ic" style="left:578px;top:273px" width="20" height="20" viewBox="0 0 20 20"><rect x="2.5" y="2.5" width="11" height="11" fill="#e8f0fc" stroke="#9ab8e8" stroke-width="0.8"/><text x="8" y="10.5" font-family="Liberation Sans" font-size="8" fill="#9ab8e8" text-anchor="middle">W</text><rect x="8.5" y="10" width="9" height="7" fill="#fff" stroke="#ccc" stroke-width="0.8"/><rect x="10" y="11.5" width="6" height="4" fill="#f0c8a0"/></svg>
<div class="sep" style="left:603px;top:274px;height:18px"></div>
<svg class="ic" style="left:612px;top:273px" width="20" height="20" viewBox="0 0 20 20"><rect x="3.5" y="4.5" width="12" height="11.5" fill="#fff" stroke="#3a5aa8" stroke-width="1"/><rect x="3.5" y="4.5" width="12" height="2" fill="#3a6ae0"/><path d="M7.5 6.5 V16 M11.5 6.5 V16 M3.5 10 H15.5 M3.5 13 H15.5" stroke="#3a5aa8" stroke-width="0.9"/></svg>
<svg class="ic" style="left:637px;top:273px" width="20" height="20" viewBox="0 0 20 20"><rect x="3.5" y="4.5" width="12" height="11.5" fill="#fff" stroke="#c8d0e8" stroke-width="1"/><rect x="3.5" y="4.5" width="12" height="2" fill="#c8d0f0"/><path d="M7.5 6.5 V16 M11.5 6.5 V16 M3.5 10 H15.5 M3.5 13 H15.5" stroke="#c8d0e8" stroke-width="0.9"/><rect x="10.5" y="3" width="6.5" height="6.5" fill="#fff" stroke="#f08080" stroke-width="0.9"/><path d="M12 4.5 L15.5 8 M15.5 4.5 L12 8" stroke="#f06060" stroke-width="1.2"/></svg>
<svg class="ic" style="left:660px;top:273px" width="20" height="20" viewBox="0 0 20 20"><text x="5" y="8" font-family="Liberation Serif" font-size="8" fill="#888" text-anchor="middle">T</text><path d="M7.5 7.5 H17.5 V17 H7.5Z M7.5 10.5 H17.5 M7.5 13.5 H17.5 M11 7.5 V17 M14 7.5 V17" fill="none" stroke="#c8d0e8" stroke-width="0.9"/></svg>
<svg class="ic" style="left:685px;top:273px" width="20" height="20" viewBox="0 0 20 20"><path d="M3.5 5.5 H16.5 V17 H3.5Z M3.5 8.5 H16.5 M3.5 14 H16.5 M7 5.5 V17 M10 5.5 V17 M13 5.5 V17" fill="#fff" stroke="#b8c8e8" stroke-width="0.9"/><rect x="3.5" y="10" width="13" height="3" fill="#b8d0f0"/><path d="M10 1 V6" stroke="#888" stroke-width="0.9"/><path d="M8.5 2.5 L10 1 L11.5 2.5" fill="none" stroke="#888" stroke-width="0.8"/></svg>
<svg class="ic" style="left:709px;top:273px" width="20" height="20" viewBox="0 0 20 20"><path d="M3 3.5 H6 V16.5 H3" fill="none" stroke="#888" stroke-width="1"/><rect x="5" y="8" width="9" height="4" fill="#f0b8c0" stroke="#e89aa8" stroke-width="0.6"/><path d="M14 10 H18 M16.5 8.5 L18 10 L16.5 11.5" fill="none" stroke="#888" stroke-width="0.9"/></svg>
<svg class="ic" style="left:732px;top:273px" width="20" height="20" viewBox="0 0 20 20"><path d="M5.5 3.5 H17.5 V17 H5.5Z M5.5 7 H17.5 M5.5 10.5 H17.5 M5.5 14 H17.5 M9.5 3.5 V17 M13.5 3.5 V17" fill="#fff" stroke="#b8c8e8" stroke-width="0.9"/><rect x="9.5" y="3.5" width="2.5" height="13.5" fill="#b8d0f0"/><path d="M1 10 H6 M2.5 8.5 L1 10 L2.5 11.5" fill="none" stroke="#888" stroke-width="0.9"/></svg>
<svg class="ic" style="left:757px;top:273px" width="20" height="20" viewBox="0 0 20 20"><path d="M3.5 3 V6 H16.5 V3" fill="none" stroke="#888" stroke-width="1"/><rect x="8" y="5" width="4" height="8" fill="#f0b8c0" stroke="#e89aa8" stroke-width="0.6"/><path d="M10 13 V17.5 M8.5 16 L10 17.5 L11.5 16" fill="none" stroke="#888" stroke-width="0.9"/></svg>
<svg class="ic" style="left:780px;top:273px" width="20" height="20" viewBox="0 0 20 20"><rect x="2.5" y="3.5" width="15" height="12.5" fill="#fff" stroke="#b8c8e8" stroke-width="1"/><rect x="6" y="7" width="11" height="8.5" fill="#dcdcf4"/><path d="M2.5 7 H17.5 M6 3.5 V16 M2.5 10 H6 M2.5 13 H6 M11 3.5 V7" stroke="#c0c4e8" stroke-width="0.9" fill="none"/></svg>
<svg class="ic" style="left:804px;top:273px" width="20" height="20" viewBox="0 0 20 20"><rect x="2.5" y="3.5" width="15" height="12.5" fill="#fff" stroke="#b8c8e8" stroke-width="1"/><rect x="6" y="7" width="8" height="5.5" fill="#d6e6f6"/><path d="M2.5 6.5 H17.5 M2.5 13 H17.5 M6 3.5 V16 M14 3.5 V16 M2.5 9.5 H6 M14 9.5 H17.5" stroke="#a8c0e0" stroke-width="0.9" fill="none"/><path d="M8 9.7 H13 M11 8 L13 9.7 L11 11.4" stroke="#fff" stroke-width="1.2" fill="none"/></svg>
<svg class="ic" style="left:828px;top:273px" width="20" height="20" viewBox="0 0 20 20"><rect x="2.5" y="3.5" width="15" height="12.5" fill="#fff" stroke="#b8c8e8" stroke-width="1"/><rect x="6" y="6.5" width="8" height="9" fill="#d6e6f6"/><path d="M2.5 6.5 H17.5 M6 3.5 V16 M14 3.5 V16 M2.5 9.5 H6 M2.5 12.5 H6 M14 9.5 H17.5 M14 12.5 H17.5" stroke="#a8c0e0" stroke-width="0.9" fill="none"/><path d="M10 8 V14 M8.3 12 L10 14 L11.7 12" stroke="#fff" stroke-width="1.2" fill="none"/></svg>
<svg class="ic" style="left:852px;top:273px" width="20" height="20" viewBox="0 0 20 20"><rect x="2.5" y="3.5" width="15" height="12.5" fill="#fff" stroke="#c0c4e0" stroke-width="1"/><rect x="6" y="6.5" width="11" height="9" fill="#d8d0ec"/><path d="M2.5 6.5 H17.5 M6 3.5 V16 M2.5 9.5 H17.5 M2.5 12.5 H17.5 M10 6.5 V16 M13.5 6.5 V16" stroke="#c0c8e4" stroke-width="0.9" fill="none"/></svg>
<svg class="ic" style="left:876px;top:273px" width="20" height="20" viewBox="0 0 20 20"><rect x="2.5" y="3.5" width="15" height="12.5" fill="#fff" stroke="#a8c0e0" stroke-width="1"/><rect x="6" y="6.5" width="11" height="9" fill="#d6e6f6"/><path d="M2.5 6.5 H17.5 M6 3.5 V16 M2.5 9.5 H17.5 M2.5 12.5 H17.5" stroke="#a8c0e0" stroke-width="0.9" fill="none"/></svg>
<svg class="ic" style="left:900px;top:273px" width="20" height="20" viewBox="0 0 20 20"><rect x="2.5" y="3.5" width="15" height="12.5" fill="#fff" stroke="#a8c0e0" stroke-width="1"/><rect x="6" y="3.5" width="8" height="12.5" fill="#d6e6f6"/><path d="M6 3.5 V16 M8.7 3.5 V16 M11.3 3.5 V16 M14 3.5 V16 M2.5 6.5 H6 M2.5 9.5 H6 M2.5 12.5 H6 M14 6.5 H17.5 M14 9.5 H17.5 M14 12.5 H17.5" stroke="#a8c0e0" stroke-width="0.9" fill="none"/></svg>
<svg class="ic" style="left:924px;top:273px" width="20" height="20" viewBox="0 0 20 20"><path d="M3.5 3.5 H11.5 L15.5 7.5 V17.5 H3.5Z" fill="#fafafa" stroke="#e4e4e4" stroke-width="0.8"/><rect x="9.5" y="11" width="2" height="6.5" fill="#a8e0a0"/><rect x="12" y="9" width="2" height="8.5" fill="#f0c8a0"/><rect x="14.5" y="12" width="2" height="5.5" fill="#a8d8e8"/></svg>
<div class="sep" style="left:949px;top:274px;height:18px"></div>
<svg class="ic" style="left:957px;top:273px" width="20" height="20" viewBox="0 0 20 20"><rect x="6" y="3" width="8" height="5" fill="#eee" stroke="#aaa" stroke-width="0.7"/><rect x="3" y="7" width="14" height="7" rx="1" fill="#333"/><rect x="3" y="9" width="14" height="1" fill="#777"/><rect x="5.5" y="13" width="9" height="4.5" fill="#fff" stroke="#999" stroke-width="0.7"/><rect x="6" y="14.5" width="8" height="1.2" fill="#2a60e0"/></svg>
<svg class="ic" style="left:981px;top:273px" width="20" height="20" viewBox="0 0 20 20"><rect x="2.5" y="2.5" width="11" height="13" fill="#f4f6f9" stroke="#aaa" stroke-width="0.8"/><circle cx="9" cy="9" r="4" fill="#3a80d0" stroke="#ddd" stroke-width="1.2"/><path d="M7 8 Q9 6 10.5 8.5 Q9.5 11 8 10Z" fill="#70c040"/><path d="M12 12 L16.5 16.5" stroke="#444" stroke-width="2"/></svg>
<svg class="ic" style="left:1005px;top:273px" width="20" height="20" viewBox="0 0 20 20"><rect x="4" y="3.5" width="4.5" height="2.5" fill="#333"/><rect x="11.5" y="3.5" width="4.5" height="2.5" fill="#333"/><rect x="3" y="6" width="6" height="9" rx="1" fill="#444"/><rect x="11" y="6" width="6" height="9" rx="1" fill="#444"/><rect x="8.5" y="8" width="3" height="4" fill="#555"/><rect x="3" y="14" width="6" height="3" fill="#222"/><rect x="11" y="14" width="6" height="3" fill="#222"/></svg>
<svg class="ic" style="left:1029px;top:273px" width="20" height="20" viewBox="0 0 20 20"><rect x="3.5" y="4" width="10" height="13" rx="1" fill="#c86c2a" stroke="#8a4a1a" stroke-width="0.8"/><rect x="6" y="2.5" width="5" height="3" rx="1" fill="#ddd" stroke="#888" stroke-width="0.6"/><path d="M7.5 9 H13.5 L17 12 V18 H7.5Z" fill="#f0f2f6" stroke="#999" stroke-width="0.8"/></svg>
<svg class="ic" style="left:1053px;top:273px" width="20" height="20" viewBox="0 0 20 20"><circle cx="10" cy="10" r="7" fill="#4a70e0" stroke="#3a58c0" stroke-width="0.8"/><text x="10" y="14" font-family="Liberation Sans" font-weight="bold" font-size="10.5" fill="#fff" text-anchor="middle">?</text></svg>
</div>

<div class="btn"><svg style="position:absolute;left:12px;top:10px" width="14" height="14" viewBox="0 0 14 14"><path d="M1.3 4.3 L5 7.8 L11 1.3" fill="none" stroke="#fff" stroke-width="3"/><rect x="0" y="9.5" width="13" height="3.5" rx="0.4" fill="#fff"/></svg><span style="position:absolute;left:30px;top:0">保存</span></div>
</body></html>
